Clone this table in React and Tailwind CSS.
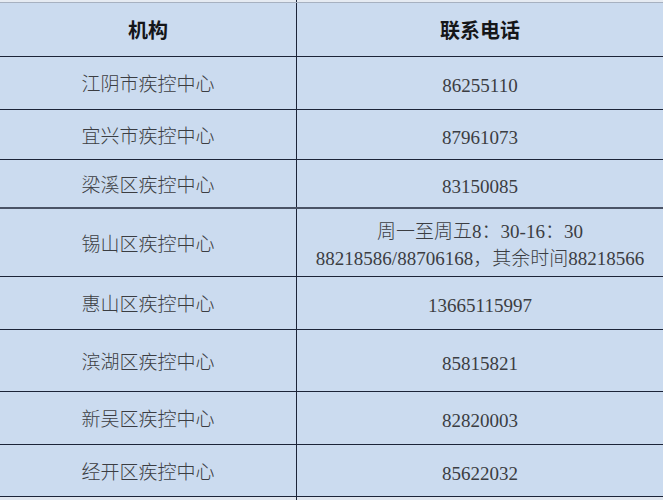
const rows = [
  { name: "江阴市疾控中心", phone: ["86255110"], h: "h-[53px]" },
  { name: "宜兴市疾控中心", phone: ["87961073"], h: "h-[50px]" },
  { name: "梁溪区疾控中心", phone: ["83150085"], h: "h-[49px]", thick: true },
  {
    name: "锡山区疾控中心",
    phone: ["周一至周五8：30-16：30", "88218586/88706168，其余时间88218566"],
    h: "h-[68px]",
  },
  { name: "惠山区疾控中心", phone: ["13665115997"], h: "h-[53px]" },
  { name: "滨湖区疾控中心", phone: ["85815821"], h: "h-[62px]" },
  { name: "新吴区疾控中心", phone: ["82820003"], h: "h-[53px]" },
  { name: "经开区疾控中心", phone: ["85622032"], h: "h-[52px]" },
];

function Row({ name, phone, h, thick }) {
  const border = thick ? "border-b-2 border-[#4a5366]" : "border-b border-[#1c2438]";
  return (
    <div className={`flex ${h} ${border}`}>
      <div className="w-[297px] shrink-0 flex items-center justify-center pt-[5px] border-r border-[#1c2438] text-[19px] text-[#3b3d42]">
        {name}
      </div>
      <div className="flex-1 flex flex-col items-center justify-center pt-[5px] text-[19px] leading-[27px] text-[#3b3d42]">
        {phone.map((line) => (
          <span key={line} className="whitespace-nowrap">{line}</span>
        ))}
      </div>
    </div>
  );
}

export default function App() {
  return (
    <div className="w-[663px] h-[500px] overflow-hidden bg-[#cbdbef] font-['Liberation_Serif','Noto_Sans_CJK_SC',serif] font-light">
      <div className="flex h-[3px] bg-[#e6ebf2] border-b border-[#a7b1c0]">
        <div className="w-[297px] border-r border-[#1c2438]" />
      </div>
      <div className="flex h-[54px] border-b border-[#1c2438]">
        <div className="w-[297px] shrink-0 flex items-center justify-center pt-[3px] border-r border-[#1c2438] text-[20px] font-bold text-[#151619]">
          机构
        </div>
        <div className="flex-1 flex items-center justify-center pt-[3px] text-[20px] font-bold text-[#151619]">
          联系电话
        </div>
      </div>
      {rows.map((r) => (
        <Row key={r.name} {...r} />
      ))}
      <div className="flex h-[4px] bg-[#dfe5ee]">
        <div className="w-[297px] border-r border-[#1c2438]" />
      </div>
    </div>
  );
}
